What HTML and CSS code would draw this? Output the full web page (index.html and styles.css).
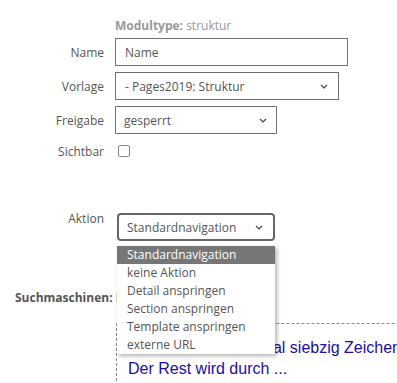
FILE: index.html
```html
<!DOCTYPE html>
<html lang="de">
<head>
  <meta charset="UTF-8">
  <title>Modul bearbeiten</title>
  <link rel="stylesheet" href="styles.css">
</head>
<body>

<div class="form">
  <div class="row row-type">
    <div class="label"></div>
    <div class="modultype"><b>Modultype:</b> struktur</div>
  </div>

  <div class="row">
    <div class="label">Name</div>
    <input type="text" class="field field-name" value="Name">
  </div>

  <div class="row">
    <div class="label">Vorlage</div>
    <div class="field select select-vorlage">
      <span>- Pages2019: Struktur</span>
      <svg class="chevron" width="8" height="5" viewBox="0 0 8 5"><polyline points="1,1 4,4 7,1" fill="none" stroke="#444" stroke-width="1.2"/></svg>
    </div>
  </div>

  <div class="row">
    <div class="label">Freigabe</div>
    <div class="field select select-freigabe">
      <span>gesperrt</span>
      <svg class="chevron" width="8" height="5" viewBox="0 0 8 5"><polyline points="1,1 4,4 7,1" fill="none" stroke="#444" stroke-width="1.2"/></svg>
    </div>
  </div>

  <div class="row row-check">
    <div class="label">Sichtbar</div>
    <span class="checkbox"></span>
  </div>

  <div class="row row-aktion">
    <div class="label label-top">Aktion</div>
    <div class="dropdown">
      <div class="field select select-aktion">
        <span>Standardnavigation</span>
        <svg class="chevron" width="8" height="5" viewBox="0 0 8 5"><polyline points="1,1 4,4 7,1" fill="none" stroke="#444" stroke-width="1.2"/></svg>
      </div>
      <ul class="options">
        <li class="active">Standardnavigation</li>
        <li>keine Aktion</li>
        <li>Detail anspringen</li>
        <li>Section anspringen</li>
        <li>Template anspringen</li>
        <li>externe URL</li>
      </ul>
    </div>
  </div>
</div>

<h4 class="seo-title">Suchmaschinen: Meta-Angaben</h4>

<div class="preview">
  <div class="preview-line">Dein Titel hat maximal siebzig Zeichen.</div>
  <div class="preview-line">Der Rest wird durch ...</div>
</div>

</body>
</html>
```

FILE: styles.css
```css
body {
  margin: 0;
  font-family: 'Open Sans', sans-serif;
  font-size: 12px;
  color: #555;
  background: white;
  overflow: hidden;
  height: 383px;
}
.form {
  padding-top: 17px;
}
.row {
  display: flex;
  align-items: center;
  margin-bottom: 6px;
}
.row-type {
  height: 17px;
  margin-bottom: 4px;
}
.label {
  width: 104px;
  margin-right: 11px;
  text-align: right;
  flex-shrink: 0;
}
.modultype {
  color: #999;
}
.field {
  box-sizing: border-box;
  height: 28px;
  border: 1px solid #707070;
  border-radius: 0;
  padding: 0 9px;
  font-family: 'Open Sans', sans-serif;
  font-size: 12px;
  color: #555;
  background: white;
  margin: 0;
}
.field-name {
  width: 233px;
  outline: none;
}
.select {
  display: flex;
  align-items: center;
  justify-content: space-between;
}
.select-vorlage {
  width: 224px;
  padding-right: 10px;
}
.select-freigabe {
  width: 162px;
  padding-left: 8px;
}
.chevron {
  display: block;
}
.row-check {
  height: 22px;
}
.checkbox {
  box-sizing: border-box;
  display: block;
  width: 12px;
  height: 12px;
  margin-left: 3px;
  border: 1px solid #8a8a8a;
  border-radius: 2px;
}
.row-aktion {
  margin-top: 51px;
  align-items: flex-start;
}
.label-top {
  margin-top: -3px;
}
.dropdown {
  position: relative;
  margin-left: 2px;
}
.select-aktion {
  width: 158px;
  border: 2px solid #666;
  border-radius: 4px;
  padding: 0 10px 0 8px;
}
.options {
  position: absolute;
  top: 33px;
  left: 0;
  width: 158px;
  margin: 0;
  padding: 0;
  list-style: none;
  background: white;
  box-shadow: 2px 2px 4px rgba(0,0,0,0.3);
  z-index: 2;
}
.options li {
  height: 18px;
  line-height: 18px;
  padding-left: 10px;
}
.options li.active {
  background: #767676;
  color: white;
}
.seo-title {
  margin: 49px 0 0 15px;
  font-size: 12px;
  font-weight: bold;
  line-height: 16px;
  color: #555;
  white-space: nowrap;
}
.preview {
  margin: 17px 0 0 116px;
  width: 400px;
  height: 100px;
  border: 1px dashed #888;
  padding: 13px 11px;
  font-family: 'Liberation Sans', Arial, sans-serif;
  font-size: 16px;
  line-height: 21px;
  color: #1a0dab;
  white-space: nowrap;
}
```
